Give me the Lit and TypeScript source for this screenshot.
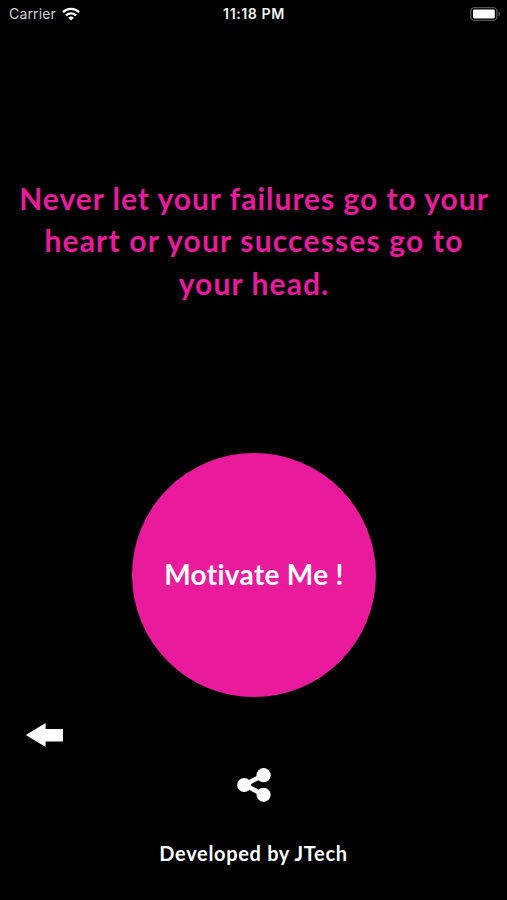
import { LitElement, html, css } from "lit";
import { customElement } from "lit/decorators.js";

@customElement("status-bar")
class StatusBar extends LitElement {
  static styles = css`
    :host {
      display: grid;
      grid-template-columns: 1fr auto 1fr;
      align-items: center;
      height: 28px;
      padding: 0 6px 0 9px;
      font: 500 14px/28px Inter, sans-serif;
      color: #f0f0f0;
    }
    .carrier {
      display: flex;
      align-items: center;
      gap: 6px;
      font-weight: 400;
      color: #d4d4d4;
      letter-spacing: 0.15px;
    }
    .time {
      font-weight: 600;
      font-size: 14.2px;
      letter-spacing: 0.55px;
      margin-right: 2px;
    }
    .battery {
      justify-self: end;
    }
    svg {
      display: block;
    }
  `;
  render() {
    return html`
      <div class="carrier">
        <span>Carrier</span>
        <svg width="18" height="14" viewBox="0 0 18 14" fill="none" stroke="#fff" stroke-width="2.3">
          <path d="M1 5.1a11.4 11.4 0 0 1 16 0" />
          <path d="M4 8.3a7.2 7.2 0 0 1 10 0" />
          <path d="M9 13.6 6.2 10.8a4 4 0 0 1 5.6 0Z" fill="#fff" stroke="none" />
        </svg>
      </div>
      <div class="time">11:18 PM</div>
      <svg class="battery" width="31" height="14" viewBox="0 0 31 14">
        <rect x="0.8" y="0.7" width="26" height="12.6" rx="3.6" fill="#000" stroke="#555" stroke-width="1.3" />
        <rect x="3" y="2.6" width="21.8" height="8.8" rx="1.4" fill="#fff" />
        <path d="M28.5 4.6c2.2.9 2.2 3.9 0 4.8Z" fill="#555" />
      </svg>
    `;
  }
}

@customElement("app-root")
class AppRoot extends LitElement {
  static styles = css`
    :host {
      display: flex;
      flex-direction: column;
      height: 900px;
      background: #000;
      color: #fff;
      font-family: Lato, sans-serif;
      font-weight: 700;
      overflow: hidden;
    }
    .quote {
      margin: 149px 0 0;
      height: 128px;
      display: flex;
      flex-direction: column;
      align-items: center;
      color: #e91a9c;
      font-size: 30px;
      line-height: 42.4px;
      white-space: nowrap;
      padding-left: 1px;
    }
    .l1 { letter-spacing: 0.97px; }
    .l2 { letter-spacing: 1.17px; }
    .l3 { letter-spacing: 1.1px; }
    .motivate {
      align-self: center;
      margin: 147.5px 0 0 1px;
      width: 244px;
      height: 244px;
      padding: 0 0 2px;
      border: 0;
      border-radius: 50%;
      background: #e91a9c;
      color: #fff;
      font: inherit;
      font-size: 28px;
      letter-spacing: 0.3px;
      white-space: nowrap;
    }
    .back {
      margin: 25.5px 0 0 25px;
    }
    .share {
      align-self: center;
      margin-top: 19px;
    }
    .credit {
      margin-top: 37px;
      text-align: center;
      font-size: 20px;
      line-height: 26px;
      letter-spacing: 0.67px;
    }
    svg {
      display: block;
    }
  `;
  render() {
    return html`
      <status-bar></status-bar>
      <div class="quote">
        <span class="l1">Never let your failures go to your</span>
        <span class="l2">heart or your successes go to</span>
        <span class="l3">your head.</span>
      </div>
      <button class="motivate">Motivate Me !</button>
      <svg class="back" width="39" height="26" viewBox="0 0 39 26" fill="#fff">
        <path d="M.8 13 20.6 1v6H38v12.6H20.6V25Z" />
      </svg>
      <svg class="share" width="36" height="36" viewBox="0 0 36 36" fill="#fff">
        <path d="M27.5 8 8.5 18l19 9.8" fill="none" stroke="#fff" stroke-width="4.6" />
        <circle cx="8.2" cy="18" r="7.1" />
        <circle cx="27.6" cy="8.2" r="7.1" />
        <circle cx="27.6" cy="27.8" r="7.1" />
      </svg>
      <div class="credit">Developed by JTech</div>
    `;
  }
}
